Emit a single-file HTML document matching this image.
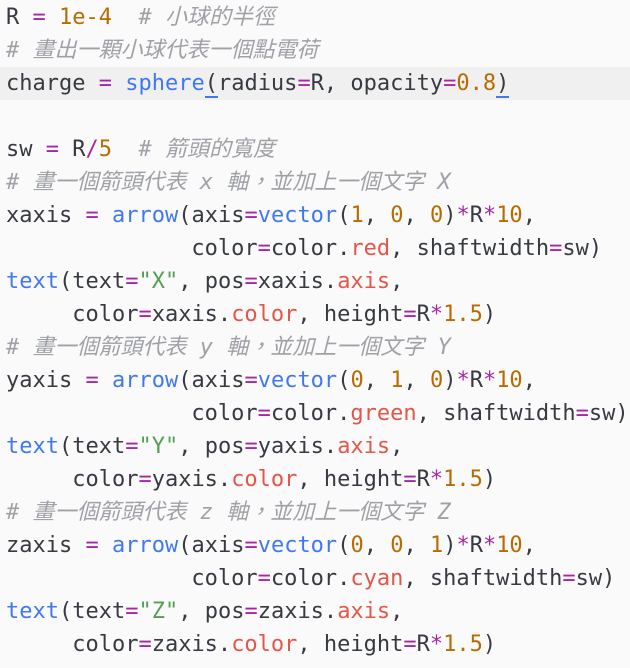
<!DOCTYPE html>
<html><head><meta charset="utf-8"><style>
html,body{margin:0;padding:0;background:#fafafa;width:630px;height:668px;overflow:hidden}
pre{margin:0;padding:1px 0 0 6px;font-family:"DejaVu Sans Mono","Liberation Mono","Noto Sans CJK TC",monospace;font-size:22px;line-height:33px;color:#383a42}
.l{display:block;height:33px;white-space:pre}
.hl{background:#f0f0f0;margin-left:-6px;padding-left:6px}
.o{color:#a626a4}.n{color:#b76b01}.b{color:#4078f2}.s{color:#50a14f}.r{color:#e45649}
.c{color:#a0a1a7;font-style:italic;font-family:"DejaVu Sans Mono","Noto Sans CJK TC",monospace}
.u{border-bottom:2px solid #4078f2}
</style></head><body><pre><span class="l">R <span class="o">=</span> <span class="n">1e-4</span>  <span class="c"># 小球的半徑</span></span><span class="l"><span class="c"># 畫出一顆小球代表一個點電荷</span></span><span class="l hl">charge <span class="o">=</span> <span class="b">sphere</span><span class="u">(</span>radius<span class="o">=</span>R, opacity<span class="o">=</span><span class="n">0.8</span><span class="u">)</span></span><span class="l"> </span><span class="l">sw <span class="o">=</span> R<span class="o">/</span><span class="n">5</span>  <span class="c"># 箭頭的寬度</span></span><span class="l"><span class="c"># 畫一個箭頭代表 x 軸，並加上一個文字 X</span></span><span class="l">xaxis <span class="o">=</span> <span class="b">arrow</span>(axis<span class="o">=</span><span class="b">vector</span>(<span class="n">1</span>, <span class="n">0</span>, <span class="n">0</span>)<span class="o">*</span>R<span class="o">*</span><span class="n">10</span>,</span><span class="l">              color<span class="o">=</span>color.<span class="r">red</span>, shaftwidth<span class="o">=</span>sw)</span><span class="l"><span class="b">text</span>(text<span class="o">=</span><span class="s">"X"</span>, pos<span class="o">=</span>xaxis.<span class="r">axis</span>,</span><span class="l">     color<span class="o">=</span>xaxis.<span class="r">color</span>, height<span class="o">=</span>R<span class="o">*</span><span class="n">1.5</span>)</span><span class="l"><span class="c"># 畫一個箭頭代表 y 軸，並加上一個文字 Y</span></span><span class="l">yaxis <span class="o">=</span> <span class="b">arrow</span>(axis<span class="o">=</span><span class="b">vector</span>(<span class="n">0</span>, <span class="n">1</span>, <span class="n">0</span>)<span class="o">*</span>R<span class="o">*</span><span class="n">10</span>,</span><span class="l">              color<span class="o">=</span>color.<span class="r">green</span>, shaftwidth<span class="o">=</span>sw)</span><span class="l"><span class="b">text</span>(text<span class="o">=</span><span class="s">"Y"</span>, pos<span class="o">=</span>yaxis.<span class="r">axis</span>,</span><span class="l">     color<span class="o">=</span>yaxis.<span class="r">color</span>, height<span class="o">=</span>R<span class="o">*</span><span class="n">1.5</span>)</span><span class="l"><span class="c"># 畫一個箭頭代表 z 軸，並加上一個文字 Z</span></span><span class="l">zaxis <span class="o">=</span> <span class="b">arrow</span>(axis<span class="o">=</span><span class="b">vector</span>(<span class="n">0</span>, <span class="n">0</span>, <span class="n">1</span>)<span class="o">*</span>R<span class="o">*</span><span class="n">10</span>,</span><span class="l">              color<span class="o">=</span>color.<span class="r">cyan</span>, shaftwidth<span class="o">=</span>sw)</span><span class="l"><span class="b">text</span>(text<span class="o">=</span><span class="s">"Z"</span>, pos<span class="o">=</span>zaxis.<span class="r">axis</span>,</span><span class="l">     color<span class="o">=</span>zaxis.<span class="r">color</span>, height<span class="o">=</span>R<span class="o">*</span><span class="n">1.5</span>)</span></pre></body></html>
